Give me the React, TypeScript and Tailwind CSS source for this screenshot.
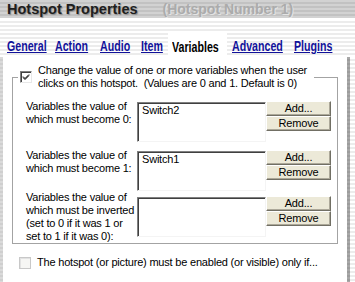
import React from "react";

const Check = ({ checked, disabled }: { checked?: boolean; disabled?: boolean }) =>
  disabled ? (
    <div className="w-[12px] h-[12px] border border-[#c8c8c8] bg-[#f6f6f4] shadow-[inset_1px_1px_0_#e2e2e2]" />
  ) : (
    <div className="w-[12px] h-[12px] border border-t-[#808080] border-l-[#808080] border-r-[#e8e8e8] border-b-[#e8e8e8] bg-white shadow-[inset_1px_1px_0_#404040] flex items-center justify-center">
      {checked && (
        <svg width="8" height="8" viewBox="0 0 8 8">
          <path d="M1 3.5 L3 5.5 L7 1.5 M1 4.5 L3 6.5 L7 2.5" stroke="#000" strokeWidth="1" fill="none" />
        </svg>
      )}
    </div>
  );

const Btn = ({ children }: { children: React.ReactNode }) => (
  <div className="w-[65px] h-[15px] bg-[#ece9d8] border border-t-white border-l-white border-r-[#716f64] border-b-[#716f64] shadow-[inset_-1px_-1px_0_#aca899] flex items-center justify-center text-[11px] leading-[13px] text-black">
    {children}
  </div>
);

const ListBox = ({ item, cls }: { item?: string; cls: string }) => (
  <div
    className={`w-[129px] h-[40px] bg-white border border-t-[#808080] border-l-[#808080] border-r-[#f4f4f4] border-b-[#f4f4f4] shadow-[inset_1px_1px_0_#404040] pl-[4px] pt-[1px] leading-[12px] ${cls}`}
  >
    {item}
  </div>
);

const Row = ({
  label,
  item,
  listCls,
  btnCls,
  rowCls,
}: {
  label: string[];
  item?: string;
  listCls: string;
  btnCls: string;
  rowCls: string;
}) => (
  <div className={`flex items-start h-[40px] ${rowCls}`}>
    <div className="w-[111px] leading-[13px]">
      {label.map((l, i) => (
        <div key={i} className="whitespace-nowrap">
          {l}
        </div>
      ))}
    </div>
    <ListBox item={item} cls={listCls} />
    <div className={`flex flex-col ${btnCls}`}>
      <Btn>Add...</Btn>
      <Btn>Remove</Btn>
    </div>
  </div>
);

const Tab = ({ t, selected }: { t: string; selected?: boolean }) => (
  <span
    className={`inline-block origin-left scale-x-[0.76] whitespace-nowrap font-bold text-[14px] leading-[15px] ${
      selected ? "text-black" : "text-[#12129a] underline underline-offset-[1px]"
    }`}
  >
    {t}
  </span>
);

export default function App() {
  const tabs: [string, string][] = [
    ["General", "w-[48px]"],
    ["Action", "w-[45px]"],
    ["Audio", "w-[41px]"],
    ["Item", "w-[27px]"],
  ];
  return (
    <div className="w-[355px] h-[282px] overflow-hidden font-['Liberation_Sans',Arial,sans-serif] text-[11px] tracking-[-0.2px] text-black bg-white">
      {/* title bar */}
      <div className="h-[19px] flex items-center pl-[7px] tracking-normal bg-[repeating-linear-gradient(180deg,#d2d2d2_0px,#d2d2d2_2px,#c2c2c2_2px,#c2c2c2_4px)] border-b border-white">
        <span className="font-bold text-[14.5px] leading-[19px] text-[#1e1e1e] [text-shadow:1px_1px_1px_#8a8a8a]">
          Hotspot Properties
        </span>
        <span className="ml-[25px] font-bold text-[14px] leading-[19px] text-[#ababab] [text-shadow:1px_1px_0_#e4e4e4]">
          (Hotspot Number 1)
        </span>
      </div>
      {/* tabs */}
      <div className="h-[38px] flex items-end pl-[7px] tracking-normal bg-[repeating-linear-gradient(180deg,#ffffff_0px,#ffffff_2px,#ececec_2px,#ececec_4px)]">
        {tabs.map(([t, w]) => (
          <div key={t} className={`${w} pb-[2px]`}>
            <Tab t={t} />
          </div>
        ))}
        <div className="w-[59px] h-[25px] bg-white flex items-end pl-[4px] pb-[2px]">
          <Tab t="Variables" selected />
        </div>
        <div className="w-[62px] ml-[5px] pb-[2px]">
          <Tab t="Advanced" />
        </div>
        <div className="pb-[2px]">
          <Tab t="Plugins" />
        </div>
      </div>
      {/* panel */}
      <div className="flex h-[225px]">
        <div className="w-[3px] bg-[repeating-linear-gradient(180deg,#dadada_0px,#dadada_2px,#cfcfcf_2px,#cfcfcf_4px)]" />
        <div className="w-[344px] bg-white pt-[20px]">
          <div className="relative ml-[9px] w-[326px] h-[167px] border border-[#a3a3a3] pt-[22px] pl-[13px]">
            <div className="absolute left-[5px] top-[-14px] w-[296px] bg-white flex items-start pl-[2px]">
              <div className="mt-[7px]">
                <Check checked />
              </div>
              <div className="ml-[6px] leading-[13px]">
                <div className="whitespace-nowrap">Change the value of one or more variables when the user</div>
                <div className="whitespace-nowrap">clicks on this hotspot.&nbsp; (Values are 0 and 1. Default is 0)</div>
              </div>
            </div>
            <Row
              label={["Variables the value of", "which must become 0:"]}
              item="Switch2"
              listCls="mt-[2px]"
              btnCls="mt-[1px]"
              rowCls=""
            />
            <Row
              label={["Variables the value of", "which must become 1:"]}
              item="Switch1"
              listCls="mt-[2px]"
              btnCls="mt-[1px]"
              rowCls="mt-[9px]"
            />
            <Row
              label={["Variables the value of", "which must be inverted", "(set to 0 if it was 1 or", "set to 1 if it was 0):"]}
              listCls="mt-[6px]"
              btnCls="mt-[5px]"
              rowCls="mt-[2px]"
            />
          </div>
          <div className="flex items-start ml-[16px] mt-[12px]">
            <div className="mt-[1px]">
              <Check disabled />
            </div>
            <div className="ml-[6px] leading-[13px] whitespace-nowrap">
              The hotspot (or picture) must be enabled (or visible) only if...
            </div>
          </div>
        </div>
        <div className="w-[3px] bg-[repeating-linear-gradient(180deg,#a8a8a8_0px,#a8a8a8_2px,#9c9c9c_2px,#9c9c9c_4px)]" />
        <div className="flex-1 bg-[repeating-linear-gradient(180deg,#ffffff_0px,#ffffff_2px,#ececec_2px,#ececec_4px)]" />
      </div>
    </div>
  );
}
